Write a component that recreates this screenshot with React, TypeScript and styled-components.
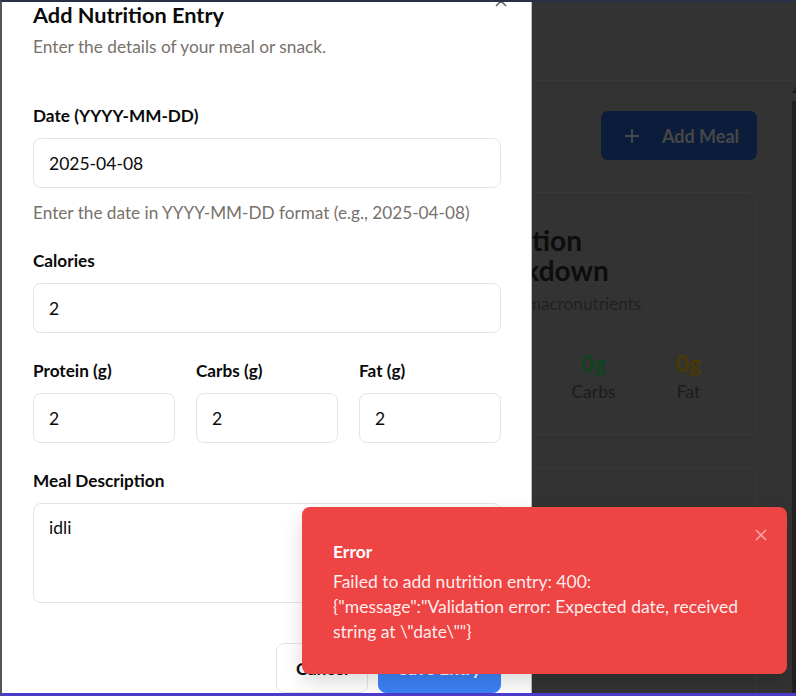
import React from "react";
import styled, { createGlobalStyle } from "styled-components";

const GlobalStyle = createGlobalStyle`
  html, body { margin: 0; padding: 0; background: #333333; }
  body { font-family: Lato, "Noto Sans", sans-serif; }
  * { box-sizing: border-box; }
`;

const Frame = styled.div`
  position: relative;
  width: 796px;
  height: 696px;
  border-top: 2px solid #2a2f4a;
  border-left: 2px solid #555555;
  border-bottom: 3px solid #4b3bc8;
  background: #333333;
  overflow: hidden;
  display: flex;
`;

/* ---------- dimmed background page ---------- */
const BgPage = styled.div`
  flex: 1;
  display: flex;
  flex-direction: column;
  min-height: 0;
`;

const BgHeader = styled.div`
  flex-shrink: 0;
  height: 79px;
  border-bottom: 1px solid #393939;
`;

const BgBody = styled.div`
  flex: 1;
  min-height: 0;
  overflow: hidden;
  display: flex;
`;

const BgMain = styled.div`
  flex: 1;
  display: flex;
  flex-direction: column;
  align-items: flex-end;
  padding: 30px 35px 0 0;
  gap: 32px;
`;

const AddMealButton = styled.div`
  flex-shrink: 0;
  height: 49px;
  width: 156px;
  border-radius: 7px;
  background: #0c1d3b;
  display: flex;
  align-items: center;
  padding: 0 0 0 24px;
  gap: 23px;
  color: #474747;
  font-weight: 700;
  font-size: 18px;
`;

const Card = styled.div<{ $height?: number }>`
  flex-shrink: 0;
  width: 322px;
  height: ${(p) => (p.$height ? `${p.$height}px` : "auto")};
  border: 1px solid #3a3a3a;
  border-radius: 10px;
  padding: 32px 20px 0 31px;
  display: flex;
  flex-direction: column;
`;

const CardTitle = styled.div`
  width: 170px;
  font-size: 28px;
  font-weight: 700;
  line-height: 30px;
  color: #0d0d0d;
`;

const CardSub = styled.div`
  margin-top: 7px;
  font-size: 17.2px;
  line-height: 24px;
  color: #222222;
`;

const StatRow = styled.div`
  margin-top: 33px;
  display: flex;
  justify-content: flex-end;
`;

const Stat = styled.div`
  flex-shrink: 0;
  width: 95px;
  display: flex;
  flex-direction: column;
  align-items: center;
`;

const StatValue = styled.div<{ $color: string }>`
  font-size: 23px;
  font-weight: 700;
  line-height: 28px;
  color: ${(p) => p.$color};
`;

const StatLabel = styled.div`
  margin-top: 3px;
  font-size: 17.5px;
  line-height: 24px;
  color: #1c1c1c;
`;

const CardEnd = styled.div`
  height: 30px;
`;

const ScrollTrack = styled.div`
  width: 4px;
  position: relative;
  margin-top: 20px;
  background: #222222;
  &::before, &::after {
    content: "";
    position: absolute;
    right: 0;
    border-left: 4px solid transparent;
  }
  &::before { top: -14px; border-bottom: 6px solid #1c1c1c; }
  &::after { bottom: 8px; border-top: 6px solid #1c1c1c; }
`;

/* ---------- dialog ---------- */
const Dialog = styled.div`
  position: absolute;
  left: 0;
  top: 0;
  bottom: 0;
  width: 530px;
  background: #ffffff;
  border-right: 1px solid #bdbdbd;
  padding: 0 30px 0 31px;
  display: flex;
  flex-direction: column;
  overflow: hidden;
`;

const CloseIcon = styled.svg`
  position: absolute;
  left: 493px;
  top: -7px;
  width: 12px;
  height: 12px;
`;

const Title = styled.h2`
  margin: -2px 0 0;
  font-size: 21.7px;
  line-height: 30px;
  font-weight: 700;
  color: #0a0a0a;
`;

const Subtitle = styled.p`
  margin: 3.5px 0 0;
  font-size: 17.3px;
  line-height: 25px;
  color: #78716c;
`;

const Form = styled.div`
  margin-top: 44px;
  display: flex;
  flex-direction: column;
`;

const Field = styled.div<{ $mt?: number }>`
  display: flex;
  flex-direction: column;
  margin-top: ${(p) => p.$mt ?? 0}px;
  min-width: 0;
`;

const Label = styled.label`
  font-size: 17.2px;
  line-height: 25px;
  font-weight: 700;
  color: #0a0a0a;
  margin-bottom: 10.5px;
`;

const Input = styled.div<{ $tall?: boolean }>`
  height: ${(p) => (p.$tall ? 100 : 50)}px;
  border: 1px solid #e4e4e7;
  border-radius: 8px;
  padding: ${(p) => (p.$tall ? "11px 15px" : "0 15px")};
  display: flex;
  align-items: ${(p) => (p.$tall ? "flex-start" : "center")};
  font-size: 17.5px;
  line-height: 25px;
  color: #0a0a0a;
`;

const Helper = styled.p`
  margin: 11.5px 0 0;
  font-size: 17.2px;
  line-height: 25px;
  color: #78716c;
`;

const Row3 = styled.div`
  margin-top: 24.5px;
  display: grid;
  grid-template-columns: repeat(3, 1fr);
  column-gap: 21px;
`;

const Footer = styled.div`
  margin-top: 40px;
  display: flex;
  justify-content: flex-end;
  gap: 10px;
`;

const Button = styled.div<{ $primary?: boolean }>`
  height: 50px;
  padding: 0 19px;
  border-radius: 8px;
  display: flex;
  align-items: center;
  font-size: 17.5px;
  font-weight: 700;
  background: ${(p) => (p.$primary ? "#3b82f6" : "#ffffff")};
  color: ${(p) => (p.$primary ? "#ffffff" : "#0a0a0a")};
  border: 1px solid ${(p) => (p.$primary ? "#3b82f6" : "#e4e4e7")};
`;

/* ---------- toast ---------- */
const Toast = styled.div`
  position: absolute;
  left: 300px;
  top: 505px;
  width: 485px;
  padding: 32px 31px 30px 31px;
  background: #ef4444;
  border-radius: 8px;
  box-shadow: 0 8px 20px rgba(0, 0, 0, 0.15);
  color: #ffffff;
`;

const ToastTitle = styled.div`
  font-size: 17.5px;
  line-height: 25px;
  font-weight: 700;
`;

const ToastMsg = styled.div`
  margin-top: 5px;
  font-size: 17.5px;
  line-height: 25px;
  color: rgba(255, 255, 255, 0.92);
`;

const ToastClose = styled.svg`
  position: absolute;
  right: 20px;
  top: 22px;
  width: 12px;
  height: 12px;
`;

export default function App() {
  return (
    <>
      <GlobalStyle />
      <Frame>
        <BgPage>
          <BgHeader />
          <BgBody>
            <BgMain>
              <AddMealButton>
                <svg width="14" height="14" viewBox="0 0 14 14">
                  <path d="M7 0v14M0 7h14" stroke="#555" strokeWidth="1.5" />
                </svg>
                <span>Add Meal</span>
              </AddMealButton>
              <Card>
                <CardTitle>Nutrition Breakdown</CardTitle>
                <CardSub>Today's macronutrients</CardSub>
                <StatRow>
                  <Stat>
                    <StatValue $color="#0d2a55">0g</StatValue>
                    <StatLabel>Protein</StatLabel>
                  </Stat>
                  <Stat>
                    <StatValue $color="#0f4420">0g</StatValue>
                    <StatLabel>Carbs</StatLabel>
                  </Stat>
                  <Stat>
                    <StatValue $color="#4a3a00">0g</StatValue>
                    <StatLabel>Fat</StatLabel>
                  </Stat>
                </StatRow>
                <CardEnd />
              </Card>
              <Card $height={260} />
            </BgMain>
            <ScrollTrack />
          </BgBody>
        </BgPage>

        <Dialog>
          <CloseIcon viewBox="0 0 12 12">
            <path d="M1 1L11 11M11 1L1 11" stroke="#5f5f5f" strokeWidth="1.5" />
          </CloseIcon>
          <Title>Add Nutrition Entry</Title>
          <Subtitle>Enter the details of your meal or snack.</Subtitle>
          <Form>
            <Field>
              <Label>Date (YYYY-MM-DD)</Label>
              <Input>2025-04-08</Input>
              <Helper>Enter the date in YYYY-MM-DD format (e.g., 2025-04-08)</Helper>
            </Field>
            <Field $mt={23}>
              <Label>Calories</Label>
              <Input>2</Input>
            </Field>
            <Row3>
              <Field>
                <Label>Protein (g)</Label>
                <Input>2</Input>
              </Field>
              <Field>
                <Label>Carbs (g)</Label>
                <Input>2</Input>
              </Field>
              <Field>
                <Label>Fat (g)</Label>
                <Input>2</Input>
              </Field>
            </Row3>
            <Field $mt={24.5}>
              <Label>Meal Description</Label>
              <Input $tall>idli</Input>
            </Field>
            <Footer>
              <Button>Cancel</Button>
              <Button $primary>Save Entry</Button>
            </Footer>
          </Form>
        </Dialog>

        <Toast>
          <ToastClose viewBox="0 0 12 12">
            <path d="M1 1L11 11M11 1L1 11" stroke="rgba(255,255,255,0.55)" strokeWidth="1.5" />
          </ToastClose>
          <ToastTitle>Error</ToastTitle>
          <ToastMsg>
            Failed to add nutrition entry: 400:
            <br />
            {'{"message":"Validation error: Expected date, received'}
            <br />
            {'string at \\"date\\""}'}
          </ToastMsg>
        </Toast>
      </Frame>
    </>
  );
}
